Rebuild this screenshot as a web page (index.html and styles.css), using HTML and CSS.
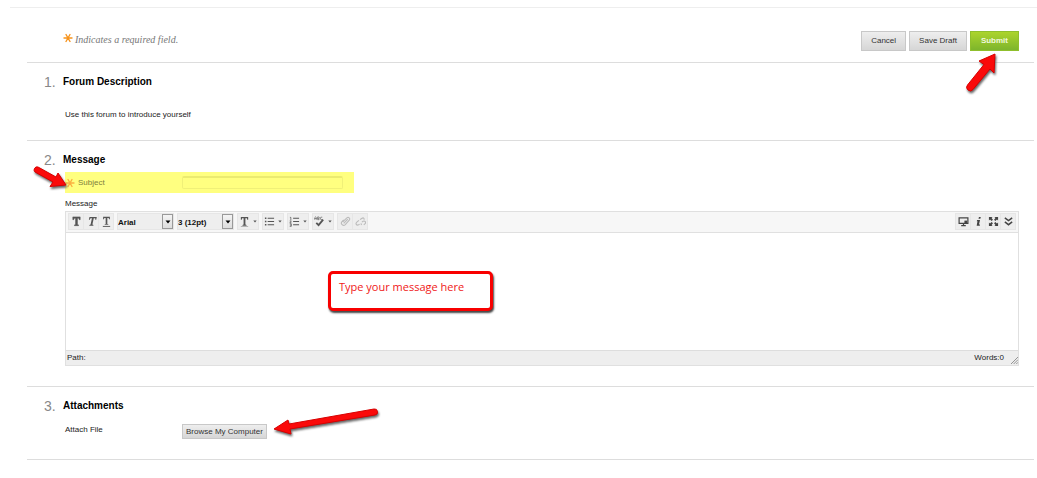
FILE: index.html
```html
<!DOCTYPE html>
<html lang="en">
<head>
<meta charset="utf-8">
<title>Create Thread</title>
<link rel="stylesheet" href="styles.css">
</head>
<body>
<svg class="defs" width="0" height="0" aria-hidden="true">
  <symbol id="star" viewBox="0 0 10 10"><path d="M1 5h8M3 1.500l4 7M7 1.500l-4 7" fill="none" stroke="currentColor" stroke-width="1.400" stroke-linecap="round"/></symbol>
  <symbol id="tee" viewBox="0 0 12 12"><path d="M2 1h8v3H9l-.4-1.600H7V9.400l1.200.3V10.500H3.800V9.700L5 9.400V2.400H3.400L3 4H2z" fill="currentColor"/></symbol>
  <symbol id="caret" viewBox="0 0 6 4"><path d="M.5.500h5L3 3.500z" fill="currentColor"/></symbol>
</svg>
<form class="page">
  <header class="top">
    <p class="required"><svg class="star"><use href="#star"/></svg><span>Indicates a required field.</span></p>
    <div class="actions">
      <button type="button" class="btn">Cancel</button>
      <button type="button" class="btn">Save Draft</button>
      <span class="anchor">
        <button type="submit" class="btn submit">Submit</button>
        <svg class="arrow arrow-submit" viewBox="0 0 38 44" aria-hidden="true"><path d="M30 2L14 9l5 3.500L2.500 33a3 3 0 0 0 5.500 4.500L25 17l4 4z"/></svg>
      </span>
    </div>
  </header>

  <section class="section description">
    <h2><span class="num">1.</span>Forum Description</h2>
    <p class="intro">Use this forum to introduce yourself</p>
  </section>

  <section class="section message">
    <h2><span class="num">2.</span>Message</h2>
    <div class="body">
      <div class="subject">
        <label for="subject"><svg class="star"><use href="#star"/></svg>Subject</label>
        <input id="subject" type="text">
        <svg class="arrow arrow-subject" viewBox="0 0 40 28" aria-hidden="true"><path d="M34 20L26 8l-2 4L6 2a3 3 0 0 0-3 5l18 10-3 4.500z"/></svg>
      </div>
      <label class="msg-label" for="message">Message</label>
      <div class="editor">
        <div class="toolbar">
          <div class="group">
            <button type="button" class="tool" aria-label="Bold"><svg viewBox="0 0 12 12"><use href="#tee" stroke="currentColor" stroke-width=".6"/></svg></button>
            <button type="button" class="tool" aria-label="Italic"><svg viewBox="0 0 12 12"><use href="#tee" transform="translate(2 0) skewX(-12)" width="12" height="12"/></svg></button>
            <button type="button" class="tool" aria-label="Underline"><svg viewBox="0 0 12 12"><use href="#tee" width="12" height="11"/><path d="M2 11.400h8" stroke="currentColor"/></svg></button>
          </div>
          <div class="pick"><select aria-label="Font"><option>Arial</option></select><span class="drop"><svg><use href="#caret"/></svg></span></div>
          <div class="pick"><select aria-label="Size"><option>3 (12pt)</option></select><span class="drop"><svg><use href="#caret"/></svg></span></div>
          <button type="button" class="tool split" aria-label="Text color"><svg viewBox="0 0 12 12"><use href="#tee" width="12" height="12"/><path d="M2 11.500h8" stroke="#aaa"/></svg><svg class="caret"><use href="#caret"/></svg></button>
          <button type="button" class="tool split" aria-label="Bulleted list"><svg viewBox="0 0 12 12"><path d="M4 2.500h7M4 6h7M4 9.500h7" stroke="currentColor" stroke-width="1.200"/><path d="M1 2.500h1.600M1 6h1.600M1 9.500h1.600" stroke="currentColor" stroke-width="1.600"/></svg><svg class="caret"><use href="#caret"/></svg></button>
          <button type="button" class="tool split" aria-label="Numbered list"><svg viewBox="0 0 12 12"><path d="M4.500 2.500H11M4.500 6H11M4.500 9.500H11" stroke="currentColor" stroke-width="1.200"/><path d="M1 1.500h1v3M.8 5.400h1.700L1 7.400h1.700M.8 8.500h1.700v2.800H.8M1 9.900h1.500" fill="none" stroke="currentColor" stroke-width=".8"/></svg><svg class="caret"><use href="#caret"/></svg></button>
          <button type="button" class="tool split" aria-label="Check spelling"><svg viewBox="0 0 12 12"><path d="M.8 4V1.800L1.700 1l.9.800V4M.8 2.800h1.800M4 1v3h1.500l.4-.7-.6-.8.5-.7L5.300 1zM4 2.500h1.300M9 1.300H7.500L7 2v1.300l.5.700H9" fill="none" stroke="currentColor" stroke-width=".7"/><path d="M2.500 7.500L5 10l5-6" fill="none" stroke="currentColor" stroke-width="2"/></svg><svg class="caret"><use href="#caret"/></svg></button>
          <div class="group faded">
            <button type="button" class="tool" aria-label="Insert link" disabled><svg viewBox="0 0 12 12"><path d="M4 8l4.500-4.500M3 6.500l4.500-4.500c1.800-1.400 4 .8 2.600 2.600L5.500 9.600c-2 1.800-5.200-1-3.500-3.200L4 4.200" fill="none" stroke="currentColor" stroke-width="1.200"/></svg></button>
            <button type="button" class="tool" aria-label="Remove link" disabled><svg viewBox="0 0 12 12"><path d="M5.500 4l1.700-1.300C9 1.500 10 2 10 4M4.300 4.700L2 6.600C.2 8.200 1.500 10.800 4 9.600l1-.8M7.500 6.700l1.300-1c2-1 3.600 1 2.200 2.700L9.600 9.600M6.500 8l.6 1.800" fill="none" stroke="currentColor" stroke-width="1.200"/></svg></button>
          </div>
          <div class="group end">
            <button type="button" class="tool" aria-label="Preview"><svg viewBox="0 0 12 12"><path d="M1.200 2h9.600v6H1.200zM6 8v2M3.500 10.500h5" fill="none" stroke="currentColor" stroke-width="1.300"/><path d="M7 5h3v3H7z" fill="currentColor"/></svg></button>
            <button type="button" class="tool" aria-label="Help"><svg viewBox="0 0 12 12"><path d="M6.500 1h2L8 3H6zM4.500 4.400h3.200L6.500 9.300h1.200l-.3 1.300H4l.9-4.900H4.100z" fill="currentColor"/></svg></button>
            <button type="button" class="tool" aria-label="Full screen"><svg viewBox="0 0 12 12"><path d="M1 1h4L3.900 2.200 5.400 4 4 5.400 2.200 3.900 1 5zM11 1v4L9.800 3.900 8 5.400 6.600 4l1.500-1.800L7 1zM1 11V7l1.200 1.100L4 6.600 5.400 8 3.900 9.800 5 11zM11 11H7l1.100-1.200L6.600 8 8 6.600l1.800 1.500L11 7z" fill="currentColor"/></svg></button>
            <button type="button" class="tool" aria-label="More tools"><svg viewBox="0 0 12 12"><path d="M2 2l4 3 4-3M2 6.500l4 3 4-3" fill="none" stroke="currentColor" stroke-width="1.600"/></svg></button>
          </div>
        </div>
        <div class="canvas">
          <textarea id="message"></textarea>
          <div class="callout">Type your message here</div>
        </div>
        <div class="status"><span>Path:</span><span class="words">Words:0</span><svg class="grip" viewBox="0 0 8 8"><path d="M0 8l8-8M3 8l5-5M6 8l2-2" stroke="#888"/></svg></div>
      </div>
    </div>
  </section>

  <section class="section attachments">
    <h2><span class="num">3.</span>Attachments</h2>
    <div class="attach">
      <label for="browse">Attach File</label>
      <span class="anchor">
        <button type="button" id="browse" class="btn browse">Browse My Computer</button>
        <svg class="arrow arrow-browse" viewBox="0 0 112 34" aria-hidden="true"><path d="M3 22L17 13l1 4 85-15a3 3 0 0 1 1 6L19 22l1 5z"/></svg>
      </span>
    </div>
  </section>
</form>
</body>
</html>
```
FILE: styles.css
```css
* { box-sizing: border-box; }
body {
  margin: 0;
  background: #fff;
  color: #222;
  font: 8px/12px "Liberation Sans", Arial, sans-serif;
}
.defs { position: absolute; }
h2, p { margin: 0; }
button, input, select, textarea { font: inherit; color: inherit; }

.page {
  margin: 7px 0 0 10px;
  padding: 0 3px 0 17px;
  border-top: 1px solid #eee;
}
.top {
  display: flex;
  justify-content: space-between;
  align-items: flex-start;
  height: 55px;
  padding: 23px 15px 0 36px;
  border-bottom: 1px solid #ddd;
}
.required {
  display: flex;
  gap: 2px;
  color: #777;
  font: italic 10px/18px "Liberation Serif", serif;
}
.star { width: 10px; height: 10px; color: #f7941d; }
.required .star { margin-top: 2px; }
.actions { display: flex; gap: 3px; }
.anchor { position: relative; display: flex; }
.btn {
  height: 20px;
  padding: 0 9px;
  border: 1px solid #c8c8c8;
  background: linear-gradient(#eee, #d6d6d6);
  color: #333;
  line-height: 12px;
  white-space: nowrap;
}
.submit {
  padding: 0 10px;
  border-color: #8fbf2c;
  background: linear-gradient(#acd42c, #7db52c);
  color: #f0f8dc;
  font-weight: bold;
}

.section { border-bottom: 1px solid #ddd; }
h2 {
  display: flex;
  align-items: center;
  height: 20px;
  color: #000;
  font-size: 10px;
}
.num {
  width: 36px;
  padding-left: 17px;
  color: #888;
  font-size: 14px;
  font-weight: normal;
}
.description { padding: 9px 0 19px; }
.intro { padding: 17px 0 0 38px; }

.message { padding: 9px 15px 20px 0; }
.body { padding: 2px 0 0 38px; }
.subject {
  position: relative;
  display: flex;
  align-items: center;
  width: 289px;
  height: 21px;
  background: #ffff80;
}
.subject label {
  display: flex;
  align-items: center;
  gap: 3px;
  width: 117px;
  color: #80803c;
}
.subject .star { color: #fbb040; }
.subject input {
  width: 161px;
  height: 13px;
  padding: 0 2px;
  border: 1px solid #f0f078;
  border-top: 2px solid #ebeb70;
  border-radius: 2px;
  background: transparent;
}
.msg-label { display: block; padding-top: 5px; }
.editor { margin-top: 1px; border: 1px solid #e0e0e0; }
.toolbar {
  display: flex;
  gap: 3px;
  height: 21px;
  padding: 1px 2px;
  border-bottom: 1px solid #e0e0e0;
  background: #f7f7f7;
}
.group { display: flex; }
.tool {
  display: flex;
  align-items: center;
  justify-content: center;
  width: 15px;
  height: 17px;
  padding: 0;
  border: 1px solid #e6e6e6;
  border-left-width: 0;
  background: #eee;
  color: #555;
}
.tool:first-child { width: 16px; border-left-width: 1px; }
.tool svg { width: 11px; height: 11px; }
.split { width: 22px; gap: 3px; border-left-width: 1px; }
.tool .caret { width: 4px; height: 3px; }
.faded .tool { color: #bbb; }
.end { margin-left: auto; }
.end .tool { color: #444; }
.pick {
  display: flex;
  width: 57px;
  height: 17px;
  border: 1px solid #e6e6e6;
  background: #eee;
}
.pick select {
  flex: 1;
  min-width: 0;
  padding: 2px 0 0;
  border: 0;
  background: transparent;
  color: #111;
  font-weight: bold;
  appearance: none;
}
.drop {
  display: flex;
  align-items: center;
  justify-content: center;
  width: 11px;
  border: 1px solid #999;
  background: linear-gradient(#f4f4f4, #ddd);
  color: #000;
}
.drop svg { width: 6px; height: 4px; }
.canvas { position: relative; height: 117px; }
textarea {
  display: block;
  width: 100%;
  height: 100%;
  border: 0;
  resize: none;
}
.callout {
  position: absolute;
  left: 262px;
  top: 38px;
  width: 165px;
  height: 40px;
  padding: 6px 8px;
  border: 3px solid #f80000;
  border-radius: 5px;
  background: #fff;
  box-shadow: 1px 2px 2px #444;
  color: #f01818;
  font: 11px/14px "Open Sans", sans-serif;
}
.status {
  display: flex;
  align-items: center;
  height: 15px;
  padding-left: 1px;
  border-top: 1px solid #ddd;
  background: #eee;
}
.words { margin-left: auto; }
.grip { width: 7px; height: 7px; margin: 5px 0 0 7px; }

.attachments { padding: 9px 0 20px; }
.attach { display: flex; padding: 8px 0 0 38px; }
.attach label { width: 117px; }
.browse { height: 15px; padding: 0 3px; }

.arrow {
  position: absolute;
  fill: #fa0a0a;
  stroke: #d80000;
  stroke-width: 1;
  stroke-linejoin: round;
  filter: drop-shadow(1px 2px 1px #666);
  pointer-events: none;
}
.arrow-submit { left: -5px; top: 21px; width: 38px; height: 44px; }
.arrow-subject { left: -33px; top: -7px; width: 40px; height: 28px; }
.arrow-browse { left: 89px; top: -17px; width: 112px; height: 34px; }
```
